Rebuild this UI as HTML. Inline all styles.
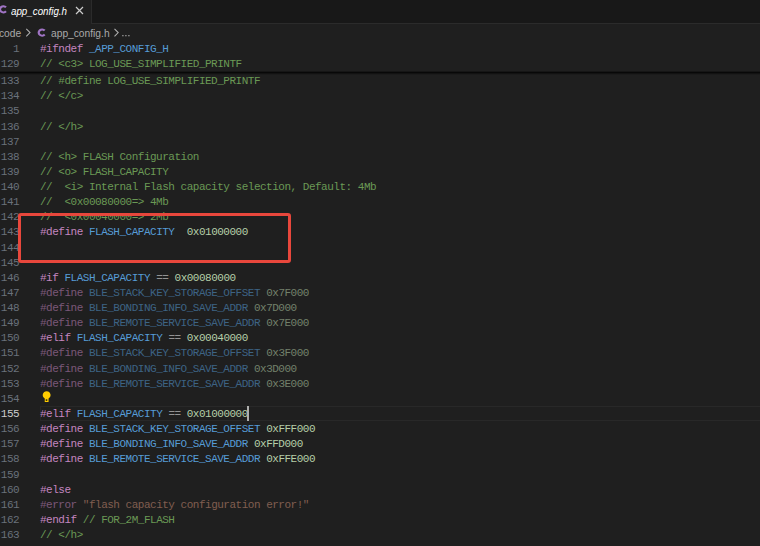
<!DOCTYPE html>
<html><head><meta charset="utf-8"><style>
html,body{margin:0;padding:0;width:760px;height:546px;overflow:hidden;background:#1f1f1f}
.tabs{position:absolute;left:0;top:0;width:760px;height:23px;background:#181818}
.tabs .bb{position:absolute;left:91px;right:0;top:23px;height:1px;background:#2b2b2b}
.tab{position:absolute;left:0;top:0;width:91px;height:24px;background:#1f1f1f;border-right:1px solid #2b2b2b}
.ticon{position:absolute;left:-2px;top:4px;font:bold 11px "Liberation Sans",sans-serif;color:#a074c4}
.ttl{position:absolute;left:11px;top:4.6px;font:italic 11.5px "Liberation Sans",sans-serif;color:#ffffff;white-space:pre;transform:scaleX(0.85);transform-origin:0 0}
.tclose{position:absolute;left:75px;top:6px;width:9px;height:9px}
.bc{position:absolute;left:0;top:24px;width:760px;height:17px;font:11px "Liberation Sans",sans-serif;color:#a9a9a9;white-space:pre}
.bc span{position:absolute;top:3px;transform:scaleX(0.93);transform-origin:0 0}
.bcsvg{position:absolute;left:0;top:0;width:760px;height:41px}
.row{position:absolute;left:0;width:760px;height:15px;font:11px "Liberation Mono",monospace;line-height:15px;white-space:pre}
.ln{position:absolute;left:0;width:19.2px;text-align:right;color:#69717b;letter-spacing:-0.49px}
.ln.act{color:#cccccc}
.code{position:absolute;left:40px;letter-spacing:-0.49px}
.dim{opacity:0.55}
.sticky{position:absolute;left:0;top:41px;width:760px;height:30.3px;background:#1f1f1f}
.sh{position:absolute;left:0;width:760px;height:1px}
.curline{position:absolute;left:40px;right:-2px;top:405.9px;height:15.13px;box-sizing:border-box;border:1px solid #282828}
.cursor{position:absolute;left:247px;top:406px;width:2px;height:15px;background:#aeafad}
.redbox{position:absolute;left:18px;top:213px;width:273px;height:50px;box-sizing:border-box;border:3px solid #e8473c;border-radius:3px}
.bulb{position:absolute;left:36px;top:386px;width:20px;height:20px}
</style></head><body>
<div class="tabs"><div class="bb"></div>
<div class="tab"><div class="ttl">app_config.h</div>
<svg class="tclose" viewBox="0 0 9 9"><path d="M1 1L8 8M8 1L1 8" stroke="#cccccc" stroke-width="1.2"/></svg></div></div>
<div class="bc"><span style="left:-1px">code</span><span style="left:51px">app_config.h</span>
</div><svg class="bcsvg" width="760" height="41" viewBox="0 0 760 41"><g fill="none" stroke="#a074c4" stroke-width="2.2"><path d="M44.7 30.59A3.4 3.05 0 1 0 44.7 34.51"/><path transform="translate(-38.7,-23.25)" d="M44.7 30.59A3.4 3.05 0 1 0 44.7 34.51"/></g><g fill="none" stroke="#b0b0b0" stroke-width="1.05"><path d="M26.3 28.8L30 32.6L26.3 36.4"/><path d="M114.5 28.8L118.2 32.6L114.5 36.4"/></g><g fill="#a9a9a9"><rect x="122.3" y="35" width="1.2" height="1.3"/><rect x="125.3" y="35" width="1.2" height="1.3"/><rect x="128.3" y="35" width="1.2" height="1.3"/></g></svg>
<div class="curline"></div>
<div class="row" style="top:74.00px"><div class="ln">133</div><div class="code"><span style="color:#6a9955">// #define LOG_USE_SIMPLIFIED_PRINTF</span></div></div><div class="row" style="top:89.00px"><div class="ln">134</div><div class="code"><span style="color:#6a9955">// &lt;/c&gt;</span></div></div><div class="row" style="top:104.00px"><div class="ln">135</div><div class="code"></div></div><div class="row" style="top:120.00px"><div class="ln">136</div><div class="code"><span style="color:#6a9955">// &lt;/h&gt;</span></div></div><div class="row" style="top:135.00px"><div class="ln">137</div><div class="code"></div></div><div class="row" style="top:150.00px"><div class="ln">138</div><div class="code"><span style="color:#6a9955">// &lt;h&gt; FLASH Configuration</span></div></div><div class="row" style="top:165.00px"><div class="ln">139</div><div class="code"><span style="color:#6a9955">// &lt;o&gt; FLASH_CAPACITY</span></div></div><div class="row" style="top:180.00px"><div class="ln">140</div><div class="code"><span style="color:#6a9955">//  &lt;i&gt; Internal Flash capacity selection, Default: 4Mb</span></div></div><div class="row" style="top:195.00px"><div class="ln">141</div><div class="code"><span style="color:#6a9955">//  &lt;0x00080000=&gt; 4Mb</span></div></div><div class="row" style="top:210.00px"><div class="ln">142</div><div class="code"><span style="color:#6a9955">//  &lt;0x00040000=&gt; 2Mb</span></div></div><div class="row" style="top:225.00px"><div class="ln">143</div><div class="code"><span style="color:#c586c0">#define</span> <span style="color:#569cd6">FLASH_CAPACITY</span>  <span style="color:#b5cea8">0x01000000</span></div></div><div class="row" style="top:241.00px"><div class="ln">144</div><div class="code"></div></div><div class="row" style="top:256.00px"><div class="ln">145</div><div class="code"></div></div><div class="row" style="top:271.00px"><div class="ln">146</div><div class="code"><span style="color:#c586c0">#if</span> <span style="color:#569cd6">FLASH_CAPACITY</span> <span style="color:#939393">==</span> <span style="color:#b5cea8">0x00080000</span></div></div><div class="row" style="top:286.00px"><div class="ln">147</div><div class="code dim"><span style="color:#c586c0">#define</span> <span style="color:#569cd6">BLE_STACK_KEY_STORAGE_OFFSET</span> <span style="color:#b5cea8">0x7F000</span></div></div><div class="row" style="top:301.00px"><div class="ln">148</div><div class="code dim"><span style="color:#c586c0">#define</span> <span style="color:#569cd6">BLE_BONDING_INFO_SAVE_ADDR</span> <span style="color:#b5cea8">0x7D000</span></div></div><div class="row" style="top:316.00px"><div class="ln">149</div><div class="code dim"><span style="color:#c586c0">#define</span> <span style="color:#569cd6">BLE_REMOTE_SERVICE_SAVE_ADDR</span> <span style="color:#b5cea8">0x7E000</span></div></div><div class="row" style="top:331.00px"><div class="ln">150</div><div class="code"><span style="color:#c586c0">#elif</span> <span style="color:#569cd6">FLASH_CAPACITY</span> <span style="color:#939393">==</span> <span style="color:#b5cea8">0x00040000</span></div></div><div class="row" style="top:346.00px"><div class="ln">151</div><div class="code dim"><span style="color:#c586c0">#define</span> <span style="color:#569cd6">BLE_STACK_KEY_STORAGE_OFFSET</span> <span style="color:#b5cea8">0x3F000</span></div></div><div class="row" style="top:362.00px"><div class="ln">152</div><div class="code dim"><span style="color:#c586c0">#define</span> <span style="color:#569cd6">BLE_BONDING_INFO_SAVE_ADDR</span> <span style="color:#b5cea8">0x3D000</span></div></div><div class="row" style="top:377.00px"><div class="ln">153</div><div class="code dim"><span style="color:#c586c0">#define</span> <span style="color:#569cd6">BLE_REMOTE_SERVICE_SAVE_ADDR</span> <span style="color:#b5cea8">0x3E000</span></div></div><div class="row" style="top:392.00px"><div class="ln">154</div><div class="code"></div></div><div class="row" style="top:407.00px"><div class="ln act">155</div><div class="code"><span style="color:#c586c0">#elif</span> <span style="color:#569cd6">FLASH_CAPACITY</span> <span style="color:#939393">==</span> <span style="color:#b5cea8">0x01000000</span></div></div><div class="row" style="top:422.00px"><div class="ln">156</div><div class="code"><span style="color:#c586c0">#define</span> <span style="color:#569cd6">BLE_STACK_KEY_STORAGE_OFFSET</span> <span style="color:#b5cea8">0xFFF000</span></div></div><div class="row" style="top:437.00px"><div class="ln">157</div><div class="code"><span style="color:#c586c0">#define</span> <span style="color:#569cd6">BLE_BONDING_INFO_SAVE_ADDR</span> <span style="color:#b5cea8">0xFFD000</span></div></div><div class="row" style="top:452.00px"><div class="ln">158</div><div class="code"><span style="color:#c586c0">#define</span> <span style="color:#569cd6">BLE_REMOTE_SERVICE_SAVE_ADDR</span> <span style="color:#b5cea8">0xFFE000</span></div></div><div class="row" style="top:468.00px"><div class="ln">159</div><div class="code"></div></div><div class="row" style="top:483.00px"><div class="ln">160</div><div class="code"><span style="color:#c586c0">#else</span></div></div><div class="row" style="top:498.00px"><div class="ln">161</div><div class="code dim"><span style="color:#c586c0">#error</span> <span style="color:#ce9178">"flash capacity configuration error!"</span></div></div><div class="row" style="top:513.00px"><div class="ln">162</div><div class="code"><span style="color:#c586c0">#endif</span> <span style="color:#6a9955">// FOR_2M_FLASH</span></div></div><div class="row" style="top:528.00px"><div class="ln">163</div><div class="code"><span style="color:#6a9955">// &lt;/h&gt;</span></div></div>
<div class="sticky">
<div class="row" style="top:1.3px"><div class="ln">1</div><div class="code"><span style="color:#c586c0">#ifndef</span> <span style="color:#569cd6">_APP_CONFIG_H</span></div></div><div class="row" style="top:16.43px"><div class="ln">129</div><div class="code"><span style="color:#6a9955">// &lt;c3&gt; LOG_USE_SIMPLIFIED_PRINTF</span></div></div>
</div>
<div class="sh" style="top:71px;background:#161616"></div><div class="sh" style="top:72px;background:#080808"></div><div class="sh" style="top:73px;background:#121212"></div><div class="sh" style="top:74px;background:#1b1b1b"></div>
<div class="cursor"></div>
<svg class="bulb" width="20" height="20" viewBox="36 386 20 20"><path d="M46.65 391.2a3.9 3.9 0 0 1 1.9 7.3V402.1H44.75V398.5a3.9 3.9 0 0 1 1.9-7.3z" fill="#ffcc00"/><rect x="45.7" y="399.3" width="1.6" height="1.6" fill="#2a2500"/></svg>
<div class="redbox"></div>
</body></html>
